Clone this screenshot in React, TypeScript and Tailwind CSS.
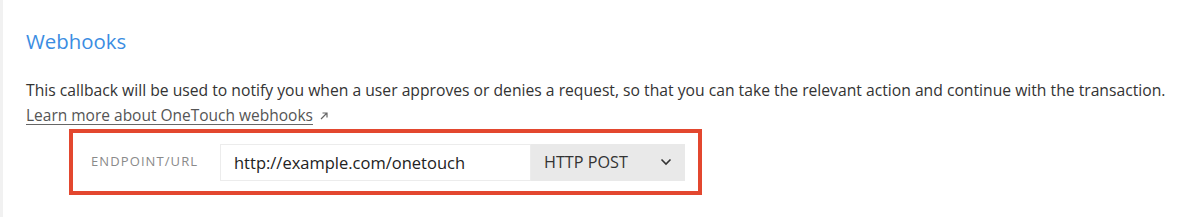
import React from "react";

const App = () => {
  return (
    <div
      className="w-[1197px] h-[217px] bg-white border-l-[3px] border-[#f1f1f1] pl-[23px] pt-[27px]"
      style={{ fontFamily: '"Open Sans", "Noto Sans", sans-serif' }}
    >
      <h2 className="text-[20.4px] leading-[28px] text-[#3b8de2]">Webhooks</h2>
      <p className="mt-[22px] text-[15.7px] leading-[26px] text-[#333]">
        This callback will be used to notify you when a user approves or denies a request, so that you can take the
        relevant action and continue with the transaction.
      </p>
      <a href="#" className="flex items-center text-[15.5px] leading-[24px] text-[#555]">
        <span className="underline underline-offset-[3px] decoration-[#666]">Learn more about OneTouch webhooks</span>
        <svg className="ml-[6px] mt-[2px]" width="10" height="10" viewBox="0 0 10 10" fill="none" stroke="#666" strokeWidth="1.2">
          <path d="M2 8L8 2M3.5 2H8V6.5" />
        </svg>
      </a>
      <div className="ml-[43px] mt-[2px] w-[633px] h-[66px] border-[4px] border-[#e3472f] flex items-center pl-[18px] pr-[13px]">
        <label htmlFor="endpoint" className="w-[129px] text-[13px] tracking-[1.1px] text-[#8a8a8a]">
          ENDPOINT/URL
        </label>
        <input
          id="endpoint"
          type="text"
          defaultValue="http://example.com/onetouch"
          className="w-[311px] h-[37px] border border-[#ececec] bg-white px-[13px] text-[16.5px] text-[#222] outline-none"
        />
        <div className="w-[154px] h-[37px] bg-[#e9e9e9] flex items-center justify-between pl-[13px] pr-[13px] text-[16.2px] text-[#333]">
          <span>HTTP POST</span>
          <svg width="12" height="8" viewBox="0 0 12 8" fill="none" stroke="#333" strokeWidth="1.6">
            <path d="M1.5 1.5L6 6L10.5 1.5" />
          </svg>
        </div>
      </div>
    </div>
  );
};

export default App;
